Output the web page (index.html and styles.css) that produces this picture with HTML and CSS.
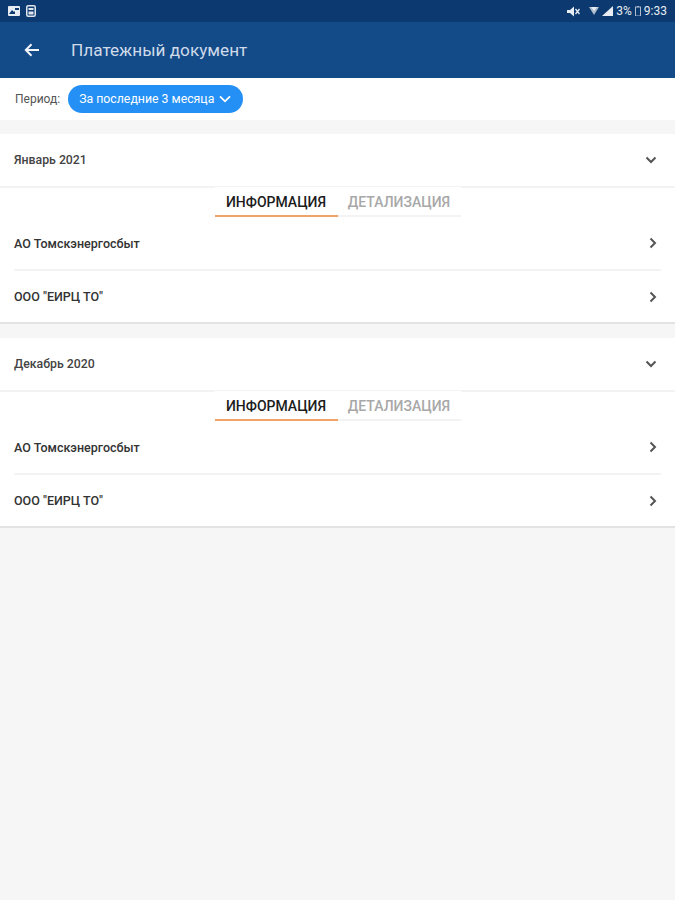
FILE: index.html
```html
<!DOCTYPE html>
<html lang="ru">
<head>
    <meta charset="UTF-8">
    <meta name="viewport" content="width=device-width, initial-scale=1.0">
    <title>Платежный документ</title>
    <link rel="stylesheet" href="styles.css">
</head>
<body>
    <div class="status-bar">
        <div class="status-left">
            <svg width="12" height="10" viewBox="0 0 12 10"><rect width="12" height="10" rx="1" fill="#e8edf3"/><path d="M1 8l3-4 2 2 1-1v3z" fill="#0d3a70"/><rect x="7" y="2" width="4" height="2" fill="#0d3a70"/></svg>
            <svg width="10" height="12" viewBox="0 0 10 12"><rect x=".75" y=".75" width="8.5" height="10.5" rx="1.5" fill="none" stroke="#dfe6ee" stroke-width="1.5"/><rect x="2.5" y="3" width="5" height="2" fill="#dfe6ee"/><rect x="2.5" y="6.5" width="5" height="3" fill="#dfe6ee"/></svg>
        </div>
        <div class="status-right">
            <svg width="13" height="11" viewBox="0 0 13 11"><path d="M0 4h3l4-3.500v10l-4-3.500H0z" fill="#e8edf3"/><path d="M8.500 3l4 5M12.500 3l-4 5" stroke="#e8edf3" stroke-width="1.300"/></svg>
            <svg class="wifi" width="10" height="10" viewBox="0 0 10 10"><path d="M0 1h10L5 9z" fill="#aebccd"/><path d="M2 1h6L5 5z" fill="#e8edf3"/></svg>
            <svg width="11" height="10" viewBox="0 0 11 10"><path d="M0 10L11 0v10z" fill="#e8edf3"/></svg>
            <span>3%</span>
            <svg width="6" height="10" viewBox="0 0 6 10"><rect x=".5" y="1" width="5" height="9" fill="none" stroke="#aebccd"/><rect x="2" y="0" width="2" height="1" fill="#aebccd"/></svg>
            <span>9:33</span>
        </div>
    </div>

    <header class="app-bar">
        <svg class="back" width="16" height="14" viewBox="0 0 16 14"><path d="M15 7H2M7.500 1.200L1.800 7l5.700 5.800" fill="none" stroke="#f2f5f9" stroke-width="2"/></svg>
        <h1>Платежный документ</h1>
    </header>

    <div class="period-bar">
        <span class="period-label">Период:</span>
        <button class="period-pill">
            За последние 3 месяца
            <svg width="12" height="8" viewBox="0 0 12 8"><path d="M1 1.300l5 5 5-5" fill="none" stroke="#fff" stroke-width="1.800"/></svg>
        </button>
    </div>

    <section class="month">
        <div class="month-head">
            <span>Январь 2021</span>
            <svg width="12" height="8" viewBox="0 0 12 8"><path d="M1.500 1.500L6 6l4.500-4.500" fill="none" stroke="#555" stroke-width="2"/></svg>
        </div>
        <div class="tabs">
            <div class="tab active">ИНФОРМАЦИЯ</div>
            <div class="tab">ДЕТАЛИЗАЦИЯ</div>
        </div>
        <div class="row">
            <span>АО Томскэнергосбыт</span>
            <svg width="8" height="12" viewBox="0 0 8 12"><path d="M1.500 1.500L6 6l-4.500 4.500" fill="none" stroke="#555" stroke-width="2"/></svg>
        </div>
        <div class="row">
            <span>ООО "ЕИРЦ ТО"</span>
            <svg width="8" height="12" viewBox="0 0 8 12"><path d="M1.500 1.500L6 6l-4.500 4.500" fill="none" stroke="#555" stroke-width="2"/></svg>
        </div>
    </section>

    <section class="month">
        <div class="month-head">
            <span>Декабрь 2020</span>
            <svg width="12" height="8" viewBox="0 0 12 8"><path d="M1.500 1.500L6 6l4.500-4.500" fill="none" stroke="#555" stroke-width="2"/></svg>
        </div>
        <div class="tabs">
            <div class="tab active">ИНФОРМАЦИЯ</div>
            <div class="tab">ДЕТАЛИЗАЦИЯ</div>
        </div>
        <div class="row">
            <span>АО Томскэнергосбыт</span>
            <svg width="8" height="12" viewBox="0 0 8 12"><path d="M1.500 1.500L6 6l-4.500 4.500" fill="none" stroke="#555" stroke-width="2"/></svg>
        </div>
        <div class="row">
            <span>ООО "ЕИРЦ ТО"</span>
            <svg width="8" height="12" viewBox="0 0 8 12"><path d="M1.500 1.500L6 6l-4.500 4.500" fill="none" stroke="#555" stroke-width="2"/></svg>
        </div>
    </section>
</body>
</html>
```

FILE: styles.css
```css
html, body {
    height: 100%;
}

body {
    margin: 0;
    background: #f6f6f6;
    font-family: 'Roboto', sans-serif;
    overflow: hidden;
}

.status-bar {
    height: 22px;
    background: #0c3a70;
    display: flex;
    justify-content: space-between;
    align-items: center;
    padding: 0 8px;
    color: #e8edf3;
    font-size: 12px;
}

.status-left, .status-right {
    display: flex;
    align-items: center;
    gap: 6px;
}

.status-right {
    gap: 3px;
}

.wifi {
    margin-left: 6px;
}

.app-bar {
    height: 56px;
    background: #134a88;
    display: flex;
    align-items: center;
    padding: 0 24px;
    box-sizing: border-box;
}

.back {
    flex: none;
}

h1 {
    margin: 0 0 0 31px;
    font-size: 17.2px;
    font-weight: 400;
    color: #cfdbe9;
}

.period-bar {
    height: 42px;
    background: #fff;
    display: flex;
    align-items: center;
    padding: 0 0 0 15px;
}

.period-label {
    font-size: 12px;
    color: #555;
    margin-right: 8px;
}

.period-pill {
    height: 28px;
    width: 175px;
    border: none;
    border-radius: 14px;
    background: #2490f5;
    color: #fff;
    font-family: inherit;
    font-size: 12.3px;
    display: flex;
    align-items: center;
    justify-content: space-between;
    padding: 0 12px 0 11px;
}

.month {
    margin-top: 14px;
    background: #fff;
    border-bottom: 2px solid #e3e3e3;
}

.month-head {
    height: 52px;
    display: flex;
    align-items: center;
    justify-content: space-between;
    padding: 0 18px 0 14px;
    font-size: 12.3px;
    font-weight: 500;
    color: #444;
    border-bottom: 2px solid #f3f3f3;
}

.tabs {
    display: flex;
    justify-content: center;
    height: 30px;
    margin-top: -1px;
    position: relative;
}

.tab {
    width: 123px;
    box-sizing: border-box;
    text-align: center;
    font-size: 14px;
    font-weight: 500;
    line-height: 30px;
    color: #a8a8a8;
    background: #fff;
    border-bottom: 2px solid #f3f3f3;
}

.tab.active {
    color: #1c1c1c;
    border-bottom-color: #f2a468;
}

.row {
    height: 54px;
    margin: 0 14px;
    padding-right: 4px;
    display: flex;
    align-items: center;
    justify-content: space-between;
    font-size: 12.5px;
    font-weight: 500;
    color: #333;
    border-bottom: 2px solid #f3f3f3;
    box-sizing: border-box;
}

.row:last-child {
    height: 51px;
    border-bottom: none;
}
```
